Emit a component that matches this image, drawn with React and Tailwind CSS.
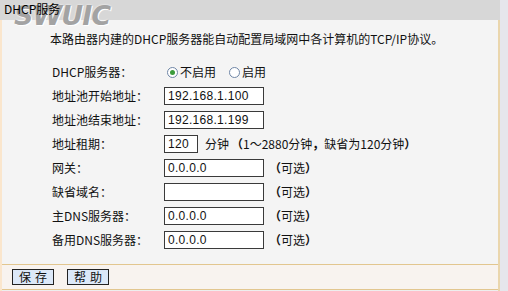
import React from "react";

const font = { fontFamily: '"Noto Sans CJK SC", "Liberation Sans", sans-serif' };

function Input({ value, w = "w-[100px]" }) {
  return (
    <div
      className={`${w} h-[18px] border border-[#3a3a3a] bg-white pl-[3px] flex items-center text-[12px] leading-none text-[#111] [font-family:'Liberation_Sans',sans-serif] tracking-[0.3px]`}
    >
      {value}
    </div>
  );
}

function Radio({ checked }) {
  return (
    <span className="w-[11px] h-[11px] rounded-full border border-[#6f86a6] bg-white flex items-center justify-center">
      {checked && <span className="w-[5px] h-[5px] rounded-full bg-[#3c9c3c]" />}
    </span>
  );
}

function Row({ label, children }) {
  return (
    <div className="h-[24px] flex items-center">
      <div className="w-[162px] pl-[50px] shrink-0 whitespace-nowrap">{label}</div>
      <div className="flex items-center">{children}</div>
    </div>
  );
}

function Optional() {
  return (
    <span className="ml-[5px]">
      <span className="font-bold">（</span>可选<span className="font-bold">）</span>
    </span>
  );
}

export default function App() {
  return (
    <div className="w-[508px] h-[291px] flex bg-[#e9e9ef] text-[12px] text-[#111] overflow-hidden" style={font}>
      <div className="w-[500px] flex flex-col">
        <div className="h-[20px] bg-[#d7d7d7] pl-[4px] pt-[1px] leading-[16px] text-[12px] text-black relative">
          <div className="absolute left-[14px] top-[2px] z-20 text-[27px] font-black italic text-[#a3a3a3] leading-[27px] tracking-[-1px] [font-family:'DejaVu_Sans',sans-serif] [text-shadow:0_0_2px_#ffffff,1px_1px_0_#ffffff] select-none">
            SWUIC
          </div>
          <span className="relative z-30">DHCP服务</span>
        </div>
        <div className="flex-1 flex flex-col border-l-[2px] border-r-[2px] border-[#ead6ad] border-l-[#fae6cd]">
          <div className="flex-1 bg-[#f4f4f4] flex flex-col">
            <div className="pl-[48px] pt-[11px] leading-[16px] h-[40px] whitespace-nowrap">
              本路由器内建的DHCP服务器能自动配置局域网中各计算机的TCP/IP协议。
            </div>
            <Row label="DHCP服务器：">
              <span className="ml-[3px] flex items-center">
                <Radio checked />
                <span className="ml-[2px]">不启用</span>
                <span className="ml-[13px]"><Radio /></span>
                <span className="ml-[2px]">启用</span>
              </span>
            </Row>
            <Row label="地址池开始地址：">
              <Input value="192.168.1.100" />
            </Row>
            <Row label="地址池结束地址：">
              <Input value="192.168.1.199" />
            </Row>
            <Row label="地址租期：">
              <Input value="120" w="w-[34px]" />
              <span className="ml-[7px]">分钟</span>
              <span className="ml-[2px]">
                <span className="font-bold">（</span>1～2880分钟<span className="font-bold">，</span>缺省为120分钟<span className="font-bold">）</span>
              </span>
            </Row>
            <Row label="网关：">
              <Input value="0.0.0.0" />
              <Optional />
            </Row>
            <Row label="缺省域名：">
              <Input value="" />
              <Optional />
            </Row>
            <Row label="主DNS服务器：">
              <Input value="0.0.0.0" />
              <Optional />
            </Row>
            <Row label="备用DNS服务器：">
              <Input value="0.0.0.0" />
              <Optional />
            </Row>
          </div>
          <div className="h-[1px] bg-[#e2c68f]" />
          <div className="h-[25px] bg-[#f8f3ef] flex items-center pl-[10px] gap-[13px] border-b border-[#e2c68f]">
            <button className="w-[42px] h-[16px] border border-[#222] bg-[#dce8f8] text-[12px] leading-none flex items-center justify-center tracking-[4px] pl-[4px]">
              保存
            </button>
            <button className="w-[42px] h-[16px] border border-[#222] bg-[#dce8f8] text-[12px] leading-none flex items-center justify-center tracking-[4px] pl-[4px]">
              帮助
            </button>
          </div>
          <div className="h-[1px] bg-[#eeeeee]" />
        </div>
      </div>
      <div className="flex-1 bg-[#e6e6ec]" />
    </div>
  );
}
